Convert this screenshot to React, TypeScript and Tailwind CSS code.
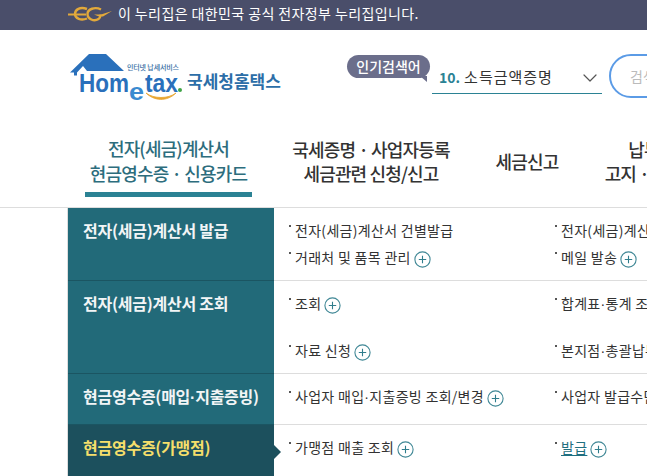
import React from 'react';
import { ChevronDown } from 'lucide-react';

const FONT = '"Noto Sans CJK KR", "Noto Sans", sans-serif';

interface MenuItem {
  label: string;
  plus?: boolean;
  link?: boolean;
}

interface MenuRow {
  title: string;
  active?: boolean;
  rowClass: string;
  gridClass: string;
  left: MenuItem[];
  right: MenuItem[];
}

const menuRows: MenuRow[] = [
  {
    title: '전자(세금)계산서 발급',
    rowClass: 'h-[73px]',
    gridClass: 'gap-y-[7px]',
    left: [{ label: '전자(세금)계산서 건별발급' }, { label: '거래처 및 품목 관리', plus: true }],
    right: [{ label: '전자(세금)계산서 수정발급' }, { label: '메일 발송', plus: true }],
  },
  {
    title: '전자(세금)계산서 조회',
    rowClass: 'h-[93px]',
    gridClass: 'gap-y-[27px]',
    left: [{ label: '조회', plus: true }, { label: '자료 신청', plus: true }],
    right: [{ label: '합계표·통계 조회' }, { label: '본지점·총괄납부 조회' }],
  },
  {
    title: '현금영수증(매입·지출증빙)',
    rowClass: 'h-[51px]',
    gridClass: '',
    left: [{ label: '사업자 매입·지출증빙 조회/변경', plus: true }],
    right: [{ label: '사업자 발급수단 관리' }],
  },
  {
    title: '현금영수증(가맹점)',
    active: true,
    rowClass: 'h-[52px]',
    gridClass: '',
    left: [{ label: '가맹점 매출 조회', plus: true }],
    right: [{ label: '발급', plus: true, link: true }],
  },
];

// the middle dot is narrow in the reference, the CJK font draws it wide
const NarrowDot = ({ text }: { text: string }) => (
  <>
    {text.split('·').map((part, i) => (
      <React.Fragment key={part}>
        {i > 0 && <span className="font-['Liberation_Sans']">·</span>}
        {part}
      </React.Fragment>
    ))}
  </>
);

const PlusIcon = () => (
  <svg width="17" height="17" viewBox="0 0 17 17" className="ml-[3px] shrink-0 mt-[4px]">
    <circle cx="8.5" cy="8.5" r="7.6" fill="none" stroke="#3f8795" strokeWidth="1.1" />
    <path d="M8.5 4.8v7.4M4.8 8.5h7.4" stroke="#2f7d8c" strokeWidth="1.1" />
  </svg>
);

const GovMark = () => (
  <svg width="44" height="16" viewBox="0 0 44 16" className="shrink-0">
    <path d="M0 8.500h18" stroke="#e2a93b" strokeWidth="2" />
    <path d="M19 3C12 .5 7 3.500 7 8s6 7 12 4.500" fill="none" stroke="#e2a93b" strokeWidth="2.400" />
    <path d="M33 3.500C27 .5 19.500 3 19.500 8s6.500 8 11 5c1.500-1 2-2.500 2.200-4.500" fill="none" stroke="#e2a93b" strokeWidth="2.400" />
    <path d="M26 8.500h7l11-3.500-9 5.500h-4z" fill="#e2a93b" />
  </svg>
);

const HometaxLogo = () => (
  <div className="relative w-[113px] h-[50px] shrink-0">
    <svg width="113" height="50" viewBox="0 0 113 50" className="absolute left-0 top-0">
      <path d="M1 18.500L20 0h17l18 17H18l-4-5-6 6.500v3h-3v-3z" fill="#2a70bb" />
      <path d="M77 39c8 8 21 9 30 0-8 6-22 6-30 0z" fill="#e8a52e" stroke="#e8a52e" strokeWidth="0.8" />
      <circle cx="111" cy="36" r="2" fill="#3fa346" />
      <text x="10" y="38" fontFamily="'Liberation Sans', sans-serif" fontWeight="700" fontSize="26" fill="#2a70bb" textLength="50" lengthAdjust="spacingAndGlyphs">Hom</text>
      <text x="60" y="46" fontFamily="'Liberation Sans', sans-serif" fontWeight="700" fontSize="24" fill="#3a8ad0" textLength="15" lengthAdjust="spacingAndGlyphs">e</text>
      <text x="76" y="38" fontFamily="'Liberation Sans', sans-serif" fontWeight="700" fontSize="25" fill="#2a70bb" textLength="33" lengthAdjust="spacingAndGlyphs">tax</text>
      <text x="58" y="16" fontFamily={FONT} fontWeight="500" fontSize="7" fill="#3a6fa5" textLength="52">인터넷 납세서비스</text>
    </svg>
  </div>
);

const Item = ({ item }: { item: MenuItem }) => (
  <div className="flex items-start h-[20px] text-[14px] leading-[20px] tracking-[0.3px] text-[#333] whitespace-nowrap">
    <span className="w-[2px] h-[2px] bg-[#555] mt-[5px] mr-[4px] shrink-0" />
    <span className={item.link ? 'text-[#1f6f80] underline underline-offset-2' : ''}>
      <NarrowDot text={item.label} />
    </span>
    {item.plus && <PlusIcon />}
  </div>
);

const NavItem = ({ lines, className }: { lines: string[]; className: string }) => (
  <div className={`flex flex-col items-center justify-center shrink-0 text-[18px] leading-[24px] font-medium tracking-[-0.85px] text-[#333] whitespace-nowrap ${className}`}>
    {lines.map(line => (
      <span key={line}>{line}</span>
    ))}
  </div>
);

export default function App() {
  return (
    <div className="w-[647px] h-[476px] overflow-hidden bg-white" style={{ fontFamily: FONT }}>
      {/* top government banner */}
      <div className="h-[30px] bg-[#4a4e6a] flex items-center pl-[68px] pb-[3px] gap-[6px]">
        <GovMark />
        <span className="text-[14px] text-white whitespace-nowrap tracking-[0.4px]">이 누리집은 대한민국 공식 전자정부 누리집입니다.</span>
      </div>

      {/* logo + search */}
      <div className="h-[76px] flex items-start pl-[69px] whitespace-nowrap">
        <div className="mt-[24px] flex items-start w-[278px] shrink-0">
          <HometaxLogo />
          <span className="ml-[5px] mt-[15px] text-[17px] leading-[24px] font-bold tracking-[0px] text-[#2c6ea8]">국세청홈택스</span>
        </div>
        <div className="relative mt-[25px] w-[83px] h-[23px] shrink-0 rounded-full bg-[#6b6e8b] text-[14px] leading-[22px] font-medium text-white text-center">
          인기검색어
          <span className="absolute right-[3px] top-[21px] border-l-[7px] border-l-transparent border-t-[6px] border-t-[#6b6e8b]" />
        </div>
        <div className="ml-[2px] mt-[32px] w-[170px] h-[32px] shrink-0 flex items-center pl-[7px] border-b border-[#2b8294]">
          <span className="text-[14px] font-bold text-[#2b8294] mr-[4px]">10.</span>
          <span className="text-[15px] text-[#333] tracking-[1px]">소득금액증명</span>
          <ChevronDown size={24} strokeWidth={1.2} className="ml-auto text-[#555]" />
        </div>
        <div className="ml-[7px] mt-[24px] w-[200px] h-[44px] shrink-0 rounded-l-full border-2 border-[#5b9be6] pl-[19px] text-[14px] leading-[40px] text-[#bbb]">
          검색어를 입력하세요
        </div>
      </div>

      {/* main nav */}
      <div className="h-[102px] flex items-start border-b border-[#ddd] pt-[29px]">
        <div className="ml-[85px] w-[167px] shrink-0 flex flex-col">
          <NavItem lines={['전자(세금)계산서', '현금영수증 · 신용카드']} className="!text-[#2d6d7d] h-[52px] !leading-[25px]" />
          <div className="h-[5px] mt-[5px] bg-[#2b8294]" />
        </div>
        <NavItem lines={['국세증명 · 사업자등록', '세금관련 신청/신고']} className="ml-[40px] w-[158px] h-[52px]" />
        <NavItem lines={['세금신고']} className="ml-[45px] w-[64px] h-[52px]" />
        <NavItem lines={['납부', '고지 · 환급']} className="ml-[45px] w-[80px] h-[52px]" />
      </div>

      {/* sub menu table */}
      <div className="ml-[67px] border-l border-[#ddd]">
        {menuRows.map(row => (
          <div key={row.title} className={`flex ${row.rowClass}`}>
            <div
              className={`relative w-[206px] shrink-0 pl-[15px] pt-[10px] text-[16px] leading-[24px] font-bold tracking-[-0.25px] whitespace-nowrap border-b ${
                row.active ? 'bg-[#1c505d] text-[#f5df6b] border-[#1c505d]' : 'bg-[#226a79] text-[#f2f5f6] border-[#1b5562]'
              }`}
            >
              <NarrowDot text={row.title} />
              {row.active && (
                <span className="absolute left-full top-[20px] border-y-[7px] border-y-transparent border-l-[7px] border-l-[#1c505d]" />
              )}
            </div>
            <div className="flex-1 min-w-0 overflow-hidden border-b border-[#ddd] pl-[15px] pt-[12px]">
              <div className={`grid grid-cols-[266px_1fr] ${row.gridClass}`}>
                {row.left.map((item, i) => (
                  <React.Fragment key={item.label}>
                    <Item item={item} />
                    <Item item={row.right[i]} />
                  </React.Fragment>
                ))}
              </div>
            </div>
          </div>
        ))}
      </div>
    </div>
  );
}
